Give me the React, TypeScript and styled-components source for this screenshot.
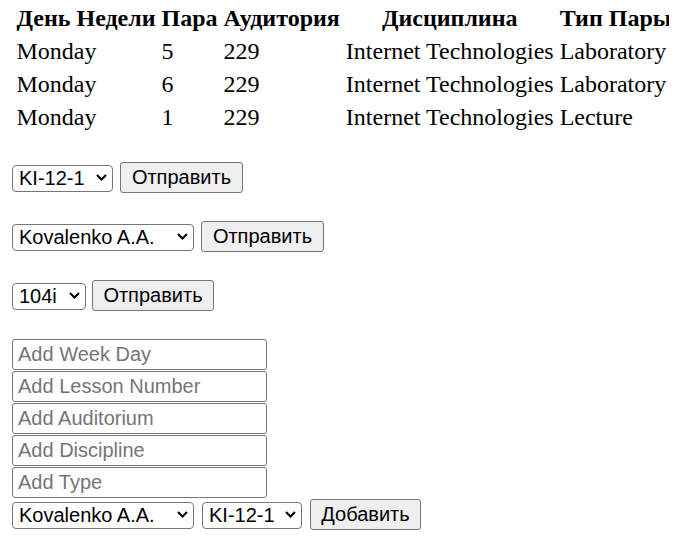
import React from "react";
import styled, { createGlobalStyle } from "styled-components";

const GlobalStyle = createGlobalStyle`
  body {
    margin: 0 12px;
    font-family: "Liberation Serif", "Times New Roman", serif;
    font-size: 24px;
    color: #000;
    background: #fff;
  }
`;

interface Lesson {
  day: string;
  pair: number;
  room: string;
  discipline: string;
  type: string;
}

const lessons: Lesson[] = [
  { day: "Monday", pair: 5, room: "229", discipline: "Internet Technologies", type: "Laboratory" },
  { day: "Monday", pair: 6, room: "229", discipline: "Internet Technologies", type: "Laboratory" },
  { day: "Monday", pair: 1, room: "229", discipline: "Internet Technologies", type: "Lecture" },
];

const ScheduleTable = styled.table`
  border-collapse: separate;
  border-spacing: 3px;
  font-size: 24px;
  white-space: nowrap;
`;

const HeadCell = styled.th`
  padding: 1.5px;
  font-weight: bold;
  text-align: center;
  line-height: normal;
`;

const Cell = styled.td`
  padding: 1.5px;
  text-align: left;
  line-height: normal;
`;

const Forms = styled.div`
  display: flex;
  flex-direction: column;
  gap: 28px;
  margin-top: 27px;
`;

const FormRow = styled.form<{ $gap?: number }>`
  display: flex;
  align-items: center;
  gap: ${({ $gap }) => $gap ?? 7}px;
  margin: 0;
  height: 31px;
`;

const AddForm = styled.form`
  display: flex;
  flex-direction: column;
  gap: 1px;
  margin: 0;
`;

const TextInput = styled.input`
  box-sizing: border-box;
  width: 255px;
  height: 31px;
  padding: 0 5px;
  border: 1px solid #767676;
  border-radius: 3px;
  font-family: "Liberation Sans", Arial, sans-serif;
  font-size: 20px;
  color: #000;
  background: #fff;
  outline: none;

  &::placeholder {
    color: #757575;
  }
`;

const SelectWrap = styled.div<{ $width: number }>`
  position: relative;
  width: ${({ $width }) => $width}px;
  height: 27px;
`;

const NativeSelect = styled.select`
  appearance: none;
  box-sizing: border-box;
  width: 100%;
  height: 100%;
  margin: 0;
  padding: 0 0 0 6px;
  border: 1px solid #767676;
  border-radius: 4px;
  background: #fff;
  color: #000;
  font-family: "Liberation Sans", Arial, sans-serif;
  font-size: 20px;
  outline: none;
`;

const Chevron = styled.svg`
  position: absolute;
  right: 6px;
  top: 10px;
  width: 11px;
  height: 7px;
  pointer-events: none;
`;

const Button = styled.button<{ $width: number }>`
  box-sizing: border-box;
  width: ${({ $width }) => $width}px;
  height: 31px;
  padding: 0;
  border: 1px solid #767676;
  border-radius: 3px;
  background: #efefef;
  color: #000;
  font-family: "Liberation Sans", Arial, sans-serif;
  font-size: 20px;
  cursor: default;
`;

const Select: React.FC<{ width: number; options: string[] }> = ({ width, options }) => (
  <SelectWrap $width={width}>
    <NativeSelect defaultValue={options[0]}>
      {options.map((o) => (
        <option key={o} value={o}>
          {o}
        </option>
      ))}
    </NativeSelect>
    <Chevron viewBox="0 0 11 7">
      <path d="M1 1 L5.5 5.5 L10 1" fill="none" stroke="#000" strokeWidth="2" />
    </Chevron>
  </SelectWrap>
);

const groups = ["KI-12-1", "KI-12-2"];
const teachers = ["Kovalenko A.A.", "Shevchenko O.V."];
const rooms = ["104i", "229"];

export default function App() {
  return (
    <>
      <GlobalStyle />
      <ScheduleTable>
        <thead>
          <tr>
            <HeadCell>День Недели</HeadCell>
            <HeadCell>Пара</HeadCell>
            <HeadCell>Аудитория</HeadCell>
            <HeadCell>Дисциплина</HeadCell>
            <HeadCell>Тип Пары</HeadCell>
          </tr>
        </thead>
        <tbody>
          {lessons.map((l, i) => (
            <tr key={i}>
              <Cell>{l.day}</Cell>
              <Cell>{l.pair}</Cell>
              <Cell>{l.room}</Cell>
              <Cell>{l.discipline}</Cell>
              <Cell>{l.type}</Cell>
            </tr>
          ))}
        </tbody>
      </ScheduleTable>
      <Forms>
        <FormRow onSubmit={(e) => e.preventDefault()}>
          <Select width={101} options={groups} />
          <Button $width={123}>Отправить</Button>
        </FormRow>
        <FormRow onSubmit={(e) => e.preventDefault()}>
          <Select width={182} options={teachers} />
          <Button $width={123}>Отправить</Button>
        </FormRow>
        <FormRow $gap={6} onSubmit={(e) => e.preventDefault()}>
          <Select width={74} options={rooms} />
          <Button $width={122}>Отправить</Button>
        </FormRow>
        <AddForm onSubmit={(e) => e.preventDefault()}>
          <TextInput placeholder="Add Week Day" />
          <TextInput placeholder="Add Lesson Number" />
          <TextInput placeholder="Add Auditorium" />
          <TextInput placeholder="Add Discipline" />
          <TextInput placeholder="Add Type" />
          <FormRow $gap={8}>
            <Select width={182} options={teachers} />
            <Select width={100} options={groups} />
            <Button $width={111}>Добавить</Button>
          </FormRow>
        </AddForm>
      </Forms>
    </>
  );
}
